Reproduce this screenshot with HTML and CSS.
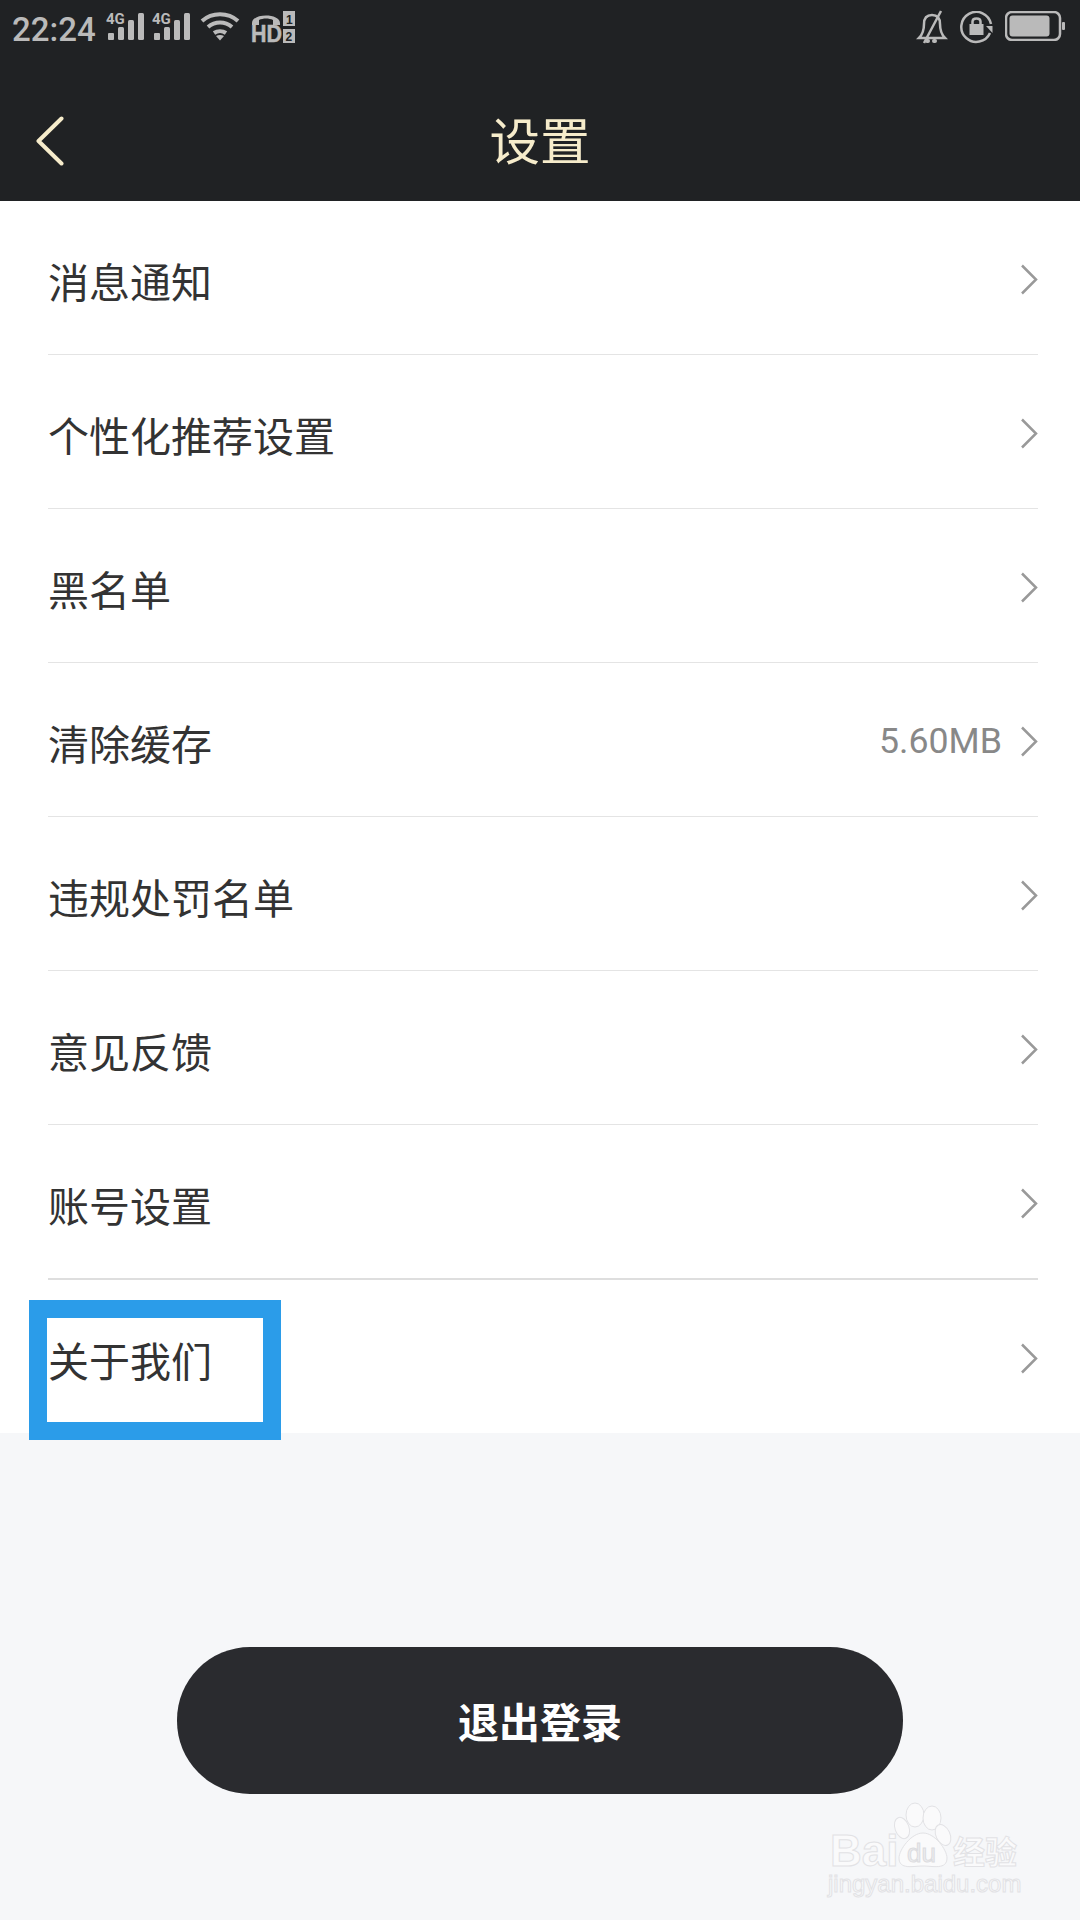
FILE: index.html
```html
<!DOCTYPE html>
<html lang="zh-CN">
<head>
  <meta charset="UTF-8">
  <meta name="viewport" content="width=device-width, initial-scale=1.0">
  <title>设置</title>
  <link rel="stylesheet" href="styles.css">
</head>
<body>
  <div class="page">
    <header class="top">
      <div class="status-bar">
        <div class="status-left">
          <span class="time">22:24</span>
          <svg class="icon-signal" width="39" height="34" viewBox="0 -4 39 34">
            <text x="0" y="12" class="tiny">4G</text>
            <rect x="2" y="21" width="6" height="7" rx="1"/>
            <rect x="12" y="15" width="6" height="13" rx="1.5"/>
            <rect x="22" y="8" width="6" height="20" rx="1.5"/>
            <rect x="32" y="1" width="6" height="27" rx="1.5"/>
          </svg>
          <svg class="icon-signal" width="39" height="34" viewBox="0 -4 39 34">
            <text x="0" y="12" class="tiny">4G</text>
            <rect x="2" y="21" width="6" height="7" rx="1"/>
            <rect x="12" y="15" width="6" height="13" rx="1.5"/>
            <rect x="22" y="8" width="6" height="20" rx="1.5"/>
            <rect x="32" y="1" width="6" height="27" rx="1.5"/>
          </svg>
          <svg class="icon-wifi" width="40" height="29" viewBox="0 0 40 29">
            <path d="M2 9 C12 0 28 0 38 9" class="line"/>
            <path d="M8 15 C15 9 25 9 32 15" class="line"/>
            <path d="M14 21 C17.500 18.500 22.500 18.500 26 21" class="line"/>
            <path d="M16 24 L20 28.500 L24 24 C21.500 22.500 18.500 22.500 16 24 Z"/>
          </svg>
          <svg class="icon-hd" width="44" height="38" viewBox="0 0 44 38">
            <path d="M1 12 C1 2 29 2 29 12 L29 14 L22 14 L22 9 C18 7 12 7 8 9 L8 14 L1 14 Z"/>
            <text x="0" y="31" class="hd-text" textLength="31" lengthAdjust="spacingAndGlyphs">HD</text>
            <rect x="32" y="0" width="12" height="15"/>
            <rect x="32" y="18" width="12" height="14"/>
            <text x="35" y="12.500" class="hd-num">1</text>
            <text x="34.500" y="29.500" class="hd-num">2</text>
          </svg>
        </div>
        <div class="status-right">
          <svg class="icon-bell" width="32" height="34" viewBox="0 0 32 34">
            <path d="M3 28 C7 24 8 20 8 14 C8 8 11 5 16 5 C21 5 24 8 24 14 C24 20 25 24 29 28 Z" class="line-thin"/>
            <path d="M25 1 L8 33" class="line-thin"/>
            <rect x="9" y="29" width="5" height="4" rx="2"/>
            <rect x="16" y="29" width="5" height="4" rx="2"/>
          </svg>
          <svg class="icon-rotate" width="33" height="33" viewBox="0 0 33 33">
            <path d="M30 22 A15 15 0 1 1 31 13" class="line-thin"/>
            <path d="M26 15 L32.500 15 L32.500 22 Z"/>
            <rect x="9.500" y="13" width="14" height="11"/>
            <path d="M12.500 13 L12.500 10.500 C12.500 6.500 20.500 6.500 20.500 10.500 L20.500 13" class="line-thin"/>
          </svg>
          <svg class="icon-battery" width="60" height="30" viewBox="0 0 60 30">
            <rect x="1" y="1" width="54" height="28" rx="6" class="line-thin"/>
            <rect x="4.500" y="4.500" width="40" height="21" rx="3"/>
            <rect x="57" y="11" width="3" height="8" rx="1"/>
          </svg>
        </div>
      </div>
      <nav class="nav">
        <a class="back" href="#">
          <svg width="28" height="50" viewBox="0 0 28 50">
            <path d="M25.500 2.500 L2.500 25 L25.500 47.500"/>
          </svg>
        </a>
        <h1 class="title">设置</h1>
        <span></span>
      </nav>
    </header>

    <ul class="menu">
      <li class="row"><span class="row-name">消息通知</span><svg class="chevron" width="18" height="31" viewBox="0 0 18 31"><path d="M2 1.500 L16 15.500 L2 29.500"/></svg></li>
      <li class="row"><span class="row-name">个性化推荐设置</span><svg class="chevron" width="18" height="31" viewBox="0 0 18 31"><path d="M2 1.500 L16 15.500 L2 29.500"/></svg></li>
      <li class="row"><span class="row-name">黑名单</span><svg class="chevron" width="18" height="31" viewBox="0 0 18 31"><path d="M2 1.500 L16 15.500 L2 29.500"/></svg></li>
      <li class="row"><span class="row-name">清除缓存</span><span class="row-value">5.60MB</span><svg class="chevron" width="18" height="31" viewBox="0 0 18 31"><path d="M2 1.500 L16 15.500 L2 29.500"/></svg></li>
      <li class="row"><span class="row-name">违规处罚名单</span><svg class="chevron" width="18" height="31" viewBox="0 0 18 31"><path d="M2 1.500 L16 15.500 L2 29.500"/></svg></li>
      <li class="row"><span class="row-name">意见反馈</span><svg class="chevron" width="18" height="31" viewBox="0 0 18 31"><path d="M2 1.500 L16 15.500 L2 29.500"/></svg></li>
      <li class="row row-strong"><span class="row-name">账号设置</span><svg class="chevron" width="18" height="31" viewBox="0 0 18 31"><path d="M2 1.500 L16 15.500 L2 29.500"/></svg></li>
      <li class="row row-last"><span class="row-name">关于我们</span><svg class="chevron" width="18" height="31" viewBox="0 0 18 31"><path d="M2 1.500 L16 15.500 L2 29.500"/></svg></li>
    </ul>

    <button class="logout">退出登录</button>

    <!-- annotation box over the last row -->
    <div class="highlight"></div>

    <svg class="watermark" width="215" height="108" viewBox="0 0 215 108">
      <text x="5" y="66" class="wm-bai">Bai</text>
      <ellipse cx="90" cy="15" rx="9" ry="12"/>
      <ellipse cx="107" cy="18" rx="9" ry="12"/>
      <ellipse cx="77" cy="28" rx="7" ry="11" transform="rotate(-20 77 28)"/>
      <ellipse cx="118" cy="35" rx="7" ry="11" transform="rotate(-25 118 35)"/>
      <path d="M98 33 C110 33 122 50 122 58 C122 70 108 66 98 66 C88 66 74 70 74 58 C74 50 86 33 98 33 Z"/>
      <text x="82" y="62" class="wm-du">du</text>
      <text x="128" y="64" class="wm-cn">经验</text>
      <text x="3" y="92" class="wm-url">jingyan.baidu.com</text>
    </svg>
  </div>
</body>
</html>
```

FILE: styles.css
```css
* {
  box-sizing: border-box;
}
body {
  margin: 0;
  font-family: "Liberation Sans", "Noto Sans CJK SC", sans-serif;
  color: #333;
}
.page {
  position: relative;
  width: 1080px;
  height: 1920px;
  overflow: hidden;
  background-color: #f6f7f9;
}

/* top bar */
.top {
  background-color: #202224;
}
.status-bar {
  display: flex;
  justify-content: space-between;
  align-items: flex-start;
  height: 81px;
  padding: 11px 15px 0 12px;
}
.status-bar svg {
  fill: #bababa;
  display: block;
}
.status-left {
  display: flex;
  align-items: flex-start;
}
.time {
  font-family: Roboto, sans-serif;
  font-size: 33px;
  font-weight: 500;
  line-height: 38px;
  color: #bababa;
}
.icon-signal {
  margin: -3px 0 0 7px;
}
.time + .icon-signal {
  margin-left: 10px;
}
.icon-wifi {
  margin: 1px 0 0 9px;
}
.icon-hd {
  margin-left: 11px;
}
.tiny {
  font-family: Roboto, sans-serif;
  font-size: 15px;
  font-weight: 700;
}
.hd-text {
  font-family: "Liberation Sans", sans-serif;
  font-size: 23px;
  font-weight: 700;
  stroke: #bababa;
  stroke-width: 0.5;
}
.hd-num {
  font-family: "Liberation Sans", sans-serif;
  font-size: 12px;
  font-weight: 700;
  fill: #202224;
}
.status-bar .line {
  fill: none;
  stroke: #bababa;
  stroke-width: 4;
}
.status-bar .line-thin {
  fill: none;
  stroke: #bababa;
  stroke-width: 2.5;
}
.status-right {
  display: flex;
  align-items: flex-start;
  gap: 12px;
}
.icon-bell {
  margin-top: -1px;
}
.nav {
  display: grid;
  grid-template-columns: 1fr auto 1fr;
  align-items: center;
  height: 120px;
  padding: 0 36px;
}
.back {
  display: block;
  width: 28px;
  height: 50px;
}
.back svg {
  display: block;
  fill: none;
  stroke: #f6eccb;
  stroke-width: 4;
  stroke-linecap: round;
  stroke-linejoin: round;
}
.title {
  margin: 0 0 7px;
  font-size: 50.500px;
  font-weight: 400;
  color: #f6eccb;
}

/* settings rows */
.menu {
  list-style: none;
  margin: 0;
  padding: 0 42px 0 48px;
  background-color: #fff;
}
.row {
  display: flex;
  align-items: center;
  height: 154px;
  border-bottom: 1px solid #e4e4e4;
}
.row-strong {
  height: 155px;
  border-bottom: 2px solid #dedede;
}
.row-last {
  height: 153px;
  border-bottom: none;
}
.row-name {
  flex: 1;
  font-size: 41px;
  color: #333;
  padding-top: 5px;
}
.row-value {
  font-family: Roboto, sans-serif;
  font-size: 35.700px;
  color: #888;
  margin: 2px 18px 0 0;
}
.chevron {
  fill: none;
  stroke: #999;
  stroke-width: 2.500;
  margin-top: 3px;
}

/* logout */
.logout {
  display: block;
  width: 726px;
  height: 147px;
  margin: 214px auto 0;
  padding: 0 0 2px;
  border: none;
  border-radius: 73px;
  background-color: #2a2b2f;
  color: #fff;
  font-family: "Liberation Sans", "Noto Sans CJK SC", sans-serif;
  font-size: 41px;
  font-weight: 700;
}

.highlight {
  position: absolute;
  left: 29px;
  top: 1300px;
  width: 252px;
  height: 140px;
  border: 18px solid #2b9ce9;
}

.watermark {
  position: absolute;
  left: 825px;
  top: 1800px;
  fill: #fafafb;
  stroke: #e2e2e5;
  stroke-width: 1;
}
.wm-bai {
  font-size: 44px;
  font-weight: 700;
}
.wm-du {
  font-size: 26px;
  fill: #ececef;
  stroke: #dcdcdf;
}
.wm-cn {
  font-size: 32px;
  font-weight: 700;
}
.wm-url {
  font-size: 24px;
}
```
